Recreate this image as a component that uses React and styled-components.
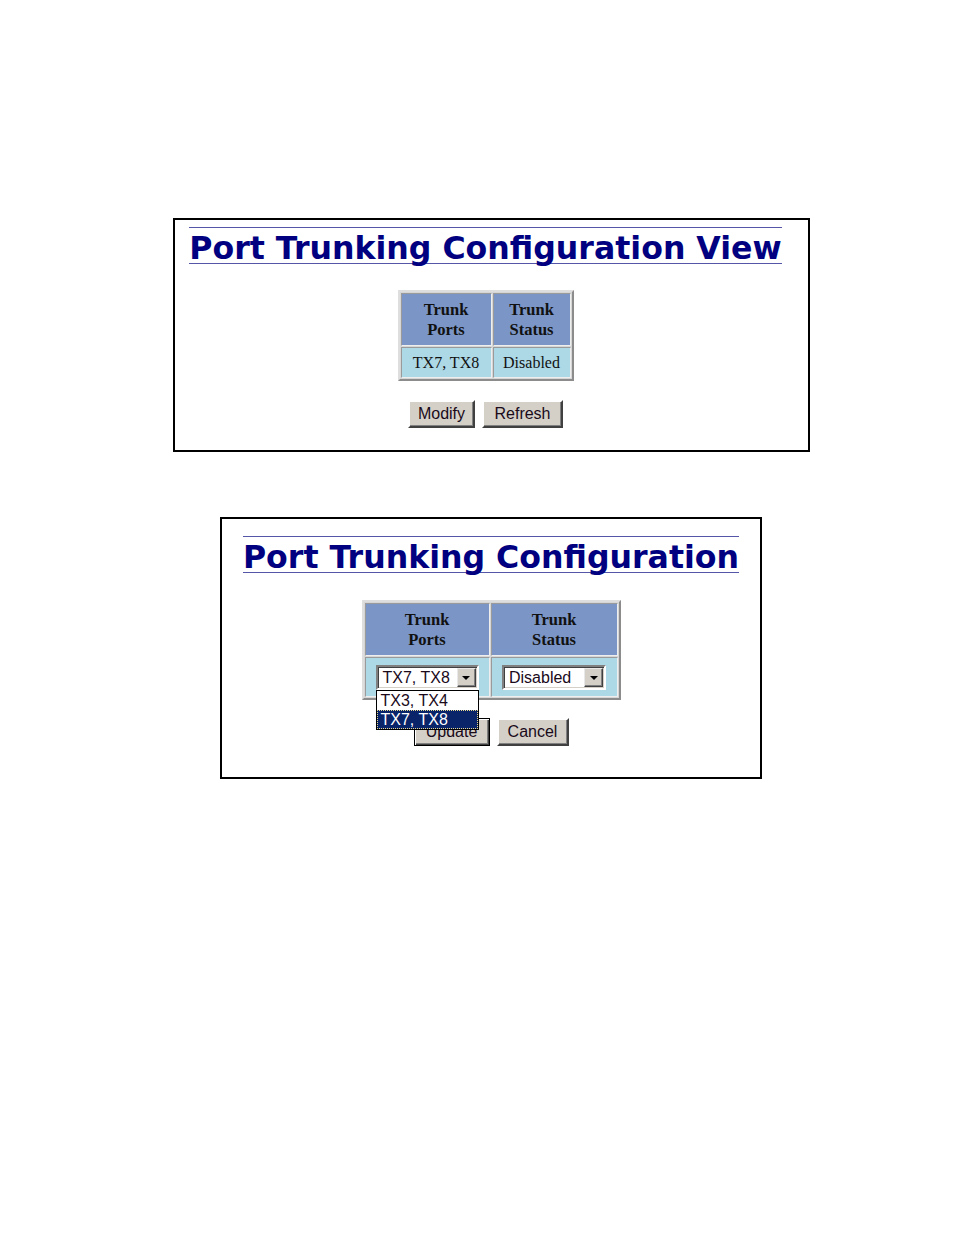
import React from 'react';
import styled, { createGlobalStyle } from 'styled-components';

const GlobalStyle = createGlobalStyle`
  html, body {
    margin: 0;
    padding: 0;
    background: #ffffff;
  }
  body {
    font-family: "Liberation Sans", Arial, sans-serif;
  }
`

const Page = styled('div')`
  width: 954px;
  min-height: 1235px;
  box-sizing: border-box;
  padding: 218px 0 0 28px;
  display: flex;
  flex-direction: column;
  align-items: center;
  gap: 65px;
`

const Panel = styled('div')`
  width: ${props => props.width}px;
  height: ${props => props.height}px;
  box-sizing: border-box;
  border: 2px solid #000;
  padding: ${props => props.pad};
  display: flex;
  flex-direction: column;
  align-items: center;
`

const Title = styled('h1')`
  margin: 0;
  box-sizing: border-box;
  height: 37px;
  padding-top: 5px;
  border-top: 1px solid #5656a8;
  border-bottom: 1px solid #5656a8;
  font-family: "DejaVu Sans", Verdana, sans-serif;
  font-weight: bold;
  font-size: 31.6px;
  line-height: 30px;
  color: #000080;
  white-space: nowrap;
`

const Table = styled('table')`
  margin-top: ${props => props.gap}px;
  border-collapse: separate;
  border-spacing: 1px;
  border: 2px solid;
  border-color: #dedede #8c8c8c #8c8c8c #dedede;
  background: #d6d6d6;
`

const HeadCell = styled('th')`
  box-sizing: border-box;
  width: ${props => props.width}px;
  height: 53px;
  padding: 0;
  border: 1px solid;
  border-color: #9a9a9a #eeeeee #eeeeee #9a9a9a;
  background: #7b96c6;
  font-family: "Liberation Serif", "Times New Roman", serif;
  font-weight: bold;
  font-size: 16.5px;
  line-height: 20px;
  color: #111;
  text-align: center;
`

const BodyCell = styled('td')`
  box-sizing: border-box;
  height: ${props => props.height}px;
  padding: 0;
  border: 1px solid;
  border-color: #9a9a9a #eeeeee #eeeeee #9a9a9a;
  background: #add8e6;
  font-family: "Liberation Serif", "Times New Roman", serif;
  font-size: 16px;
  color: #111;
  text-align: center;
  vertical-align: middle;
`

const ButtonRow = styled('div')`
  margin-top: ${props => props.gap}px;
  display: flex;
  gap: 7px;
  position: relative;
`

const Button = styled('button')`
  box-sizing: border-box;
  width: ${props => props.width}px;
  height: 28px;
  padding: 0;
  background: #d4d0c8;
  font-family: "Liberation Sans", Arial, sans-serif;
  font-size: 16px;
  color: #1a0a1a;
  border: 2px solid;
  border-color: #ffffff #404040 #404040 #ffffff;
  box-shadow: inset -1px -1px 0 #808080;
  ${props => props.isDefault && `
    border: 1px solid #000;
    box-shadow: inset 1px 1px 0 #ffffff, inset -1px -1px 0 #404040, inset -2px -2px 0 #808080;
  `}
`

const SelectWrap = styled('div')`
  position: relative;
  display: inline-block;
  vertical-align: middle;
`

const SelectBox = styled('div')`
  box-sizing: border-box;
  width: ${props => props.width}px;
  height: 25px;
  display: flex;
  align-items: stretch;
  background: #fff;
  border: 2px solid;
  border-color: #808080 #ffffff #ffffff #808080;
  box-shadow: inset 1px 1px 0 #404040, inset -1px -1px 0 #d4d0c8;
  padding: 1px;
`

const SelectText = styled('span')`
  flex: 1;
  padding-left: 4px;
  font-family: "Liberation Sans", Arial, sans-serif;
  font-size: 16px;
  line-height: 19px;
  color: #1a0a1a;
  text-align: left;
`

const ArrowButton = styled('span')`
  box-sizing: border-box;
  width: 19px;
  display: flex;
  align-items: center;
  justify-content: center;
  background: #d4d0c8;
  border: 1px solid;
  border-color: #e8e8e8 #404040 #404040 #e8e8e8;
  box-shadow: inset -1px -1px 0 #808080;
`

const Arrow = styled('span')`
  width: 0;
  height: 0;
  margin-top: 1px;
  border-left: 4px solid transparent;
  border-right: 4px solid transparent;
  border-top: 4px solid #000;
`

const DropList = styled('div')`
  position: absolute;
  left: 0;
  top: 25px;
  z-index: 5;
  box-sizing: border-box;
  width: 103px;
  border: 1px solid #000;
  background: #fff;
`

const Option = styled('div')`
  box-sizing: border-box;
  height: 19px;
  padding-left: 3px;
  font-family: "Liberation Sans", Arial, sans-serif;
  font-size: 16px;
  line-height: 17px;
  text-align: left;
  color: ${props => (props.selected ? '#ffffff' : '#1a0a1a')};
  background: ${props => (props.selected ? '#0a246a' : '#ffffff')};
  border: 1px ${props => (props.selected ? 'dotted #e8d890' : 'solid transparent')};
`

function Select({ width, value, options }) {
  return (
    <SelectWrap>
      <SelectBox width={width}>
        <SelectText>{value}</SelectText>
        <ArrowButton><Arrow /></ArrowButton>
      </SelectBox>
      {options && (
        <DropList>
          {options.map(opt => (
            <Option key={opt} selected={opt === value}>{opt}</Option>
          ))}
        </DropList>
      )}
    </SelectWrap>
  )
}

export default function App() {
  return (
    <>
      <GlobalStyle />
      <Page>
        <Panel width={637} height={234} pad="7px 27px 0 16px">
          <Title>Port Trunking Configuration View</Title>
          <Table gap={26}>
            <tbody>
              <tr>
                <HeadCell width={91}>Trunk<br />Ports</HeadCell>
                <HeadCell width={78}>Trunk<br />Status</HeadCell>
              </tr>
              <tr>
                <BodyCell height={31}>TX7, TX8</BodyCell>
                <BodyCell height={31}>Disabled</BodyCell>
              </tr>
            </tbody>
          </Table>
          <ButtonRow gap={19}>
            <Button width={67}>Modify</Button>
            <Button width={81}>Refresh</Button>
          </ButtonRow>
        </Panel>

        <Panel width={542} height={262} pad="17px 0 0 0">
          <Title>Port Trunking Configuration</Title>
          <Table gap={27}>
            <tbody>
              <tr>
                <HeadCell width={125}>Trunk<br />Ports</HeadCell>
                <HeadCell width={127}>Trunk<br />Status</HeadCell>
              </tr>
              <tr>
                <BodyCell height={40}>
                  <Select width={103} value="TX7, TX8" options={['TX3, TX4', 'TX7, TX8']} />
                </BodyCell>
                <BodyCell height={40}>
                  <Select width={104} value="Disabled" />
                </BodyCell>
              </tr>
            </tbody>
          </Table>
          <ButtonRow gap={18}>
            <Button width={76} isDefault>Update</Button>
            <Button width={72}>Cancel</Button>
          </ButtonRow>
        </Panel>
      </Page>
    </>
  );
}
